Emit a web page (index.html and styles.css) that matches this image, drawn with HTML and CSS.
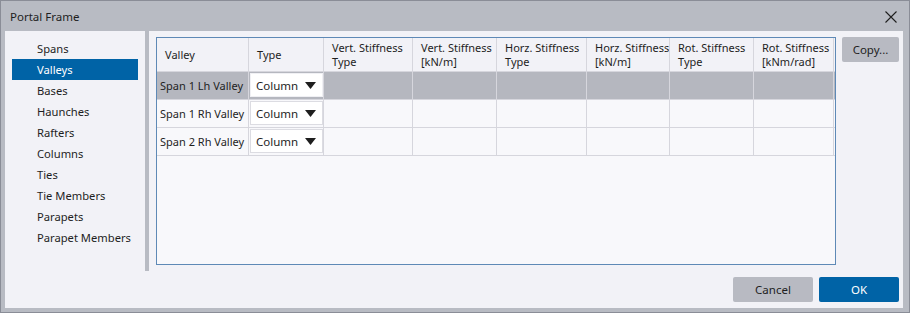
FILE: index.html
```html
<!DOCTYPE html>
<html>
<head>
<meta charset="utf-8">
<link rel="stylesheet" href="styles.css">
</head>
<body>
<div class="window">
  <div class="titlebar">
    <span class="title">Portal Frame</span>
    <svg class="close" width="12" height="12" viewBox="0 0 12 12"><path d="M0.5 0.5 L11.5 11.5 M11.5 0.5 L0.5 11.5" stroke="#1e1e1e" stroke-width="1.1" fill="none"/></svg>
  </div>
  <div class="content">
    <div class="main">
      <ul class="nav">
        <li class="nav-item">Spans</li>
        <li class="nav-item selected">Valleys</li>
        <li class="nav-item">Bases</li>
        <li class="nav-item">Haunches</li>
        <li class="nav-item">Rafters</li>
        <li class="nav-item">Columns</li>
        <li class="nav-item">Ties</li>
        <li class="nav-item">Tie Members</li>
        <li class="nav-item">Parapets</li>
        <li class="nav-item">Parapet Members</li>
      </ul>
      <div class="splitter"></div>
      <div class="grid-panel">
        <div class="table">
          <div class="row head">
            <div class="cell">Valley</div>
            <div class="cell">Type</div>
            <div class="cell">Vert. Stiffness<br>Type</div>
            <div class="cell">Vert. Stiffness<br>[kN/m]</div>
            <div class="cell">Horz. Stiffness<br>Type</div>
            <div class="cell">Horz. Stiffness<br>[kN/m]</div>
            <div class="cell">Rot. Stiffness<br>Type</div>
            <div class="cell">Rot. Stiffness<br>[kNm/rad]</div>
            <div class="cell filler"></div>
          </div>
          <div class="row body active">
            <div class="cell name">Span 1 Lh Valley</div>
            <div class="cell type"><div class="combo"><span>Column</span><svg width="11" height="7" viewBox="0 0 11 7"><path d="M0 0 H11 L5.5 7 Z" fill="#1e1e1e"/></svg></div></div>
            <div class="cell"></div><div class="cell"></div><div class="cell"></div><div class="cell"></div><div class="cell"></div><div class="cell"></div><div class="cell filler"></div>
          </div>
          <div class="row body">
            <div class="cell name">Span 1 Rh Valley</div>
            <div class="cell type"><div class="combo"><span>Column</span><svg width="11" height="7" viewBox="0 0 11 7"><path d="M0 0 H11 L5.5 7 Z" fill="#1e1e1e"/></svg></div></div>
            <div class="cell"></div><div class="cell"></div><div class="cell"></div><div class="cell"></div><div class="cell"></div><div class="cell"></div><div class="cell filler"></div>
          </div>
          <div class="row body">
            <div class="cell name">Span 2 Rh Valley</div>
            <div class="cell type"><div class="combo"><span>Column</span><svg width="11" height="7" viewBox="0 0 11 7"><path d="M0 0 H11 L5.5 7 Z" fill="#1e1e1e"/></svg></div></div>
            <div class="cell"></div><div class="cell"></div><div class="cell"></div><div class="cell"></div><div class="cell"></div><div class="cell"></div><div class="cell filler"></div>
          </div>
        </div>
        <button class="btn copy">Copy...</button>
      </div>
    </div>
    <div class="footer">
      <button class="btn cancel">Cancel</button>
      <button class="btn ok">OK</button>
    </div>
  </div>
</div>
</body>
</html>
```
FILE: styles.css
```css
* { box-sizing: border-box; }
html, body { margin: 0; padding: 0; }
body {
  font-family: "Noto Sans", "Open Sans", sans-serif;
  font-size: 11px;
  color: #1e1e1e;
  background: #b8bbc3;
}
.window {
  width: 910px;
  height: 313px;
  border: 1px solid #8a8d97;
  background: #b8bbc3;
  display: flex;
  flex-direction: column;
}
.titlebar {
  height: 30px;
  flex: none;
  display: flex;
  align-items: center;
  justify-content: space-between;
  padding: 0 12px 0 9px;
}
.title { font-size: 11.5px; }
.close { display: block; margin-top: 1px; }
.content {
  flex: 1;
  margin: 0 6px 4px 4px;
  background: #f2f2f7;
  display: flex;
  flex-direction: column;
}
.main {
  height: 240px;
  display: flex;
  flex: none;
}
.nav {
  list-style: none;
  margin: 0;
  width: 140px;
  padding: 7px 0 0 7px;
}
.nav-item {
  width: 126px;
  height: 21px;
  line-height: 21px;
  padding-left: 25px;
  white-space: nowrap;
  font-size: 11.2px;
}
.nav-item.selected {
  background: #0063a6;
  color: #ffffff;
}
.splitter {
  width: 4px;
  background: #b8bbc3;
}
.grid-panel {
  flex: 1;
  display: flex;
  align-items: flex-start;
  gap: 6px;
  padding: 6px 4px 0 7px;
}
.table {
  width: 680px;
  height: 228px;
  border: 1px solid #5e89b6;
  background: #f8f8fb;
  flex: none;
  overflow: hidden;
}
.row {
  display: grid;
  grid-template-columns: 92px 75px 89px 84px 90px 83px 84px 80px minmax(0, 1fr);
}
.cell {
  border-right: 1px solid #d6d6dd;
  border-bottom: 1px solid #d6d6dd;
  white-space: nowrap;
  overflow: hidden;
  min-width: 0;
}
.cell.filler { border-right: none; }
.head .cell {
  height: 34px;
  background: #f2f2f7;
  display: flex;
  align-items: center;
  padding-left: 8px;
  line-height: 14px;
}
.head .cell.filler { padding: 0; }
.body .cell {
  height: 28px;
}
.body .cell.name {
  padding-left: 3px;
  line-height: 27px;
}
.row.active .cell { background: #b5b7bf; }
.body .cell.type {
  padding: 1px 0 2px 1px;
}
.combo {
  height: 24px;
  background: #ffffff;
  border: 1px solid #dcdce2;
  display: flex;
  align-items: center;
  justify-content: space-between;
  padding: 0 6px 0 5px;
  font-size: 11.5px;
}
.active .combo { border-color: #f0f0f4; }
.combo svg { display: block; }
.btn {
  font-family: inherit;
  font-size: 11.5px;
  border: none;
  border-radius: 2px;
  padding: 0;
  height: 25px;
  color: #1e1e1e;
  background: #b8bac2;
}
.copy { width: 57px; flex: none; }
.footer {
  flex: 1;
  display: flex;
  justify-content: flex-end;
  align-items: flex-start;
  gap: 6px;
  padding: 6px 4px 0 0;
}
.cancel, .ok { width: 80px; }
.ok { background: #0063a6; color: #ffffff; }
```
